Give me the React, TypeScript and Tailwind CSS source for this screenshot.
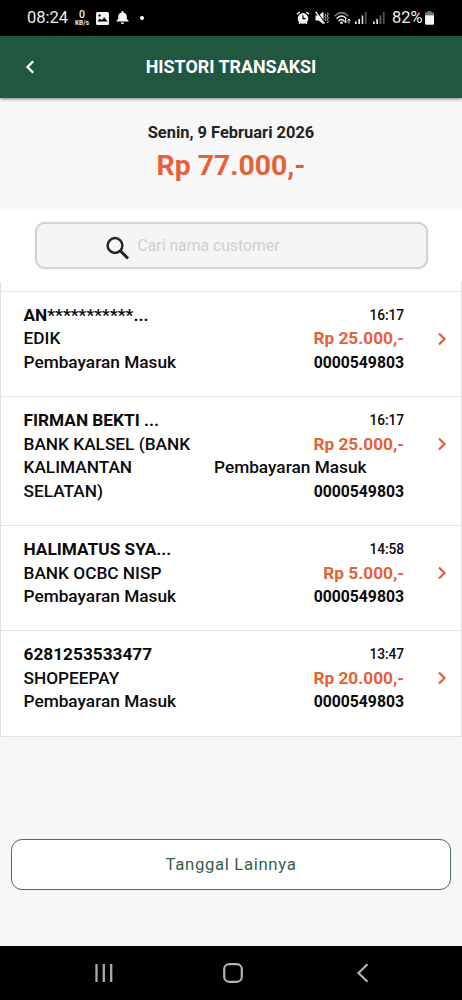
import React from "react";

type Transaction = {
  name: string;
  source: string[];
  time: string;
  amount: string;
  code: string;
};

const transactions: Transaction[] = [
  { name: "AN***********...", source: ["EDIK"], time: "16:17", amount: "Rp 25.000,-", code: "0000549803" },
  {
    name: "FIRMAN BEKTI ...",
    source: ["BANK KALSEL (BANK", "KALIMANTAN", "SELATAN)"],
    time: "16:17",
    amount: "Rp 25.000,-",
    code: "0000549803",
  },
  { name: "HALIMATUS SYA...", source: ["BANK OCBC NISP"], time: "14:58", amount: "Rp 5.000,-", code: "0000549803" },
  { name: "6281253533477", source: ["SHOPEEPAY"], time: "13:47", amount: "Rp 20.000,-", code: "0000549803" },
];

function Signal({ className, weak = false }: { className: string; weak?: boolean }) {
  return (
    <svg className={className} width="12" height="14" viewBox="0 0 12 14">
      <rect x="0" y="10.5" width="1.7" height="2.5" fill="#e8e8e8" />
      <rect x="3.3" y="8" width="1.7" height="5" fill="#e8e8e8" />
      <rect x="6.6" y="4.5" width="1.7" height="8.5" fill={weak ? "#666" : "#d0d0d0"} />
      <rect x="9.9" y="1" width="1.7" height="12" fill="#555" />
    </svg>
  );
}

function StatusBar() {
  return (
    <div className="flex h-9 shrink-0 items-center bg-black pl-[27px] pr-[27px] text-[#ececec]">
      <span className="w-[47px] text-[16.5px] leading-none">08:24</span>
      <span className="flex w-[16px] flex-col items-center text-[10.500px] font-medium leading-[11px]">
        <span>0</span>
        <span className="text-[6.500px] font-bold leading-[7px]">KB/s</span>
      </span>
      <svg className="ml-[6px]" width="13" height="13" viewBox="0 0 13 13">
        <path
          fillRule="evenodd"
          fill="#f2f2f2"
          d="M1.5 0h10A1.5 1.5 0 0 1 13 1.5v10a1.5 1.5 0 0 1-1.500 1.500h-10A1.500 1.500 0 0 1 0 11.500v-10A1.500 1.500 0 0 1 1.500 0zM1.500 9.500h10L8.300 5.300 5.700 8.300 3.900 6.500zM3.600 2.300a1.200 1.200 0 1 0 .01 0z"
        />
      </svg>
      <svg className="ml-[7px]" width="13" height="14" viewBox="0 0 13 14">
        <path fill="#f2f2f2" d="M6.500 0a1 1 0 0 1 1 1v.4c2 .4 3.300 2 3.300 4V8l1.700 1.500v.9H.5v-.9L2.200 8V5.400c0-2 1.300-3.600 3.300-4V1a1 1 0 0 1 1-1zM4.900 11.600h3.200a1.600 1.600 0 0 1-3.200 0z" />
      </svg>
      <span className="ml-[11px] size-1 rounded-full bg-white" />
      <span className="grow" />
      <svg width="14" height="14" viewBox="0 0 14 14">
        <path d="M1 3.300 3.700 1M13 3.300 10.300 1M3 12.800l1.500-1.500M11 12.800l-1.500-1.500" stroke="#f2f2f2" strokeWidth="1.500" />
        <circle cx="7" cy="7.400" r="5.300" fill="#f2f2f2" />
        <path d="M7 4.200v3.400h2.600" stroke="#000" strokeWidth="1.200" fill="none" />
      </svg>
      <svg className="ml-[5px]" width="14" height="14" viewBox="0 0 14 14">
        <path d="M0.500 4.500h3L8.500.8v12.400L3.500 9.500h-3z" fill="#f2f2f2" />
        <path d="M1 0 10.500 12" stroke="#000" strokeWidth="1.200" />
        <path d="M.6.800 9.400 12.700" stroke="#f2f2f2" strokeWidth="1.300" />
        <path d="M10 2.500l1 1.500-1 1.500 1 1.500-1 1.500 1 1.500M12.300 1.500l1 1.800-1 1.700 1 1.800-1 1.700 1 1.800-1 1.700" stroke="#d8d8d8" strokeWidth=".9" fill="none" />
      </svg>
      <svg className="ml-[5px]" width="18" height="14" viewBox="0 0 18 14">
        <g fill="none" strokeLinecap="round">
          <path d="M1 4.700Q7.500-1.500 14 4.700" stroke="#777" strokeWidth="1.500" />
          <path d="M3 7.200Q7.500 2.800 12 7.200M5 9.700Q7.500 7.200 10 9.700" stroke="#e8e8e8" strokeWidth="1.500" />
        </g>
        <circle cx="7.500" cy="11.800" r="1.300" fill="#e8e8e8" />
        <path d="M11.500 7.500v4M9.900 10.200l1.600 1.800 1.600-1.800M15 12.500v-4M13.400 9.800 15 8l1.600 1.800" stroke="#e8e8e8" strokeWidth="1" fill="none" />
      </svg>
      <Signal className="ml-[3px]" />
      <Signal className="ml-[6px]" weak />
      <span className="ml-[7px] w-[32px] whitespace-nowrap text-[16.500px] leading-none">82%</span>
      <svg className="ml-[1px] mr-px" width="9" height="14" viewBox="0 0 10 14" preserveAspectRatio="none">
        <path d="M3 0h4v1.300h1.500A1.500 1.500 0 0 1 10 2.800V4.500H0V2.800a1.500 1.500 0 0 1 1.500-1.500H3z" fill="#777" />
        <path d="M0 4.200h10v8A1.500 1.500 0 0 1 8.500 13.700h-7A1.500 1.500 0 0 1 0 12.200z" fill="#f5f5f5" />
      </svg>
    </div>
  );
}

function Row({ tx }: { tx: Transaction }) {
  const stacked = tx.source.length > 1;
  return (
    <div className="flex border-b border-[#e4e4e4] pb-[21.700px] pl-[22.500px] pt-[11.800px] text-[17.250px] font-medium leading-[23.600px] text-[#0b0b0b]">
      <div className="w-[190.500px] whitespace-nowrap">
        <div className="font-bold">{tx.name}</div>
        {tx.source.map((line) => (
          <div key={line}>{line}</div>
        ))}
        {!stacked && <div>Pembayaran Masuk</div>}
      </div>
      <div className="w-[190px] whitespace-nowrap text-right">
        <div className="text-[13.750px]/[23.600px] tracking-[-0.100px]">{tx.time}</div>
        <div className="font-bold text-[#e66038]">{tx.amount}</div>
        {stacked && <div className="text-left">Pembayaran Masuk</div>}
        <div className="text-[15.750px]/[23.600px] font-bold">{tx.code}</div>
      </div>
      <svg className="ml-[33px] mt-[28.300px]" width="10" height="14" viewBox="0 0 10 14">
        <path d="M2 1.500 7.500 7 2 12.500" fill="none" stroke="#e35f3a" strokeWidth="2.200" />
      </svg>
    </div>
  );
}

export default function App() {
  return (
    <div className="flex h-[1000px] w-[462px] flex-col overflow-hidden bg-[#f7f7f7] font-['Roboto',sans-serif]">
      <StatusBar />
      <header className="z-10 flex h-[62px] shrink-0 items-center bg-[#21573f] shadow-[0_1px_3px_rgba(0,0,0,0.5)]">
        <svg className="ml-[25px]" width="10" height="14" viewBox="0 0 10 14">
          <path d="M8.200 1.300 2.500 7l5.700 5.700" fill="none" stroke="#fff" strokeWidth="2.300" />
        </svg>
        <h1 className="grow pr-[35px] text-center text-[17.900px] font-bold text-white">HISTORI TRANSAKSI</h1>
      </header>
      <section className="flex h-[112px] shrink-0 flex-col items-center pt-[24px]">
        <p className="text-[16.450px] font-bold leading-[22px] text-[#222]">Senin, 9 Februari 2026</p>
        <p className="text-[28.400px] font-bold leading-[44px] text-[#e66038]">Rp 77.000,-</p>
      </section>
      <section className="flex h-[72px] shrink-0 justify-center bg-white pt-[12px]">
        <div className="flex h-[47px] w-[393px] items-center rounded-[10px] border-2 border-[#d3d3d3] bg-[#f5f5f5] shadow-[0_0_1px_#ccc]">
          <svg className="ml-[68.500px] mt-[5px]" width="25" height="25" viewBox="0 0 25 25">
            <circle cx="10" cy="9.500" r="7.400" fill="none" stroke="#242424" strokeWidth="2.500" />
            <path d="M15.500 15 23 22.500" stroke="#242424" strokeWidth="3" />
          </svg>
          <span className="ml-[7.500px] mt-px text-[15.750px] text-[#cfcfcf]">Cari nama customer</span>
        </div>
      </section>
      <main className="shrink-0 border-x border-[#e0e0e0] bg-white">
        <div className="h-[10px] border-b border-[#e8e8e8]" />
        {transactions.map((tx, i) => (
          <Row key={i} tx={tx} />
        ))}
      </main>
      <div className="grow" />
      <button className="mx-[11px] mb-[56px] h-[51px] shrink-0 rounded-[11px] border border-[#456f5c] bg-white pt-px text-[16.750px] tracking-[0.650px] text-[#345f4d]">
        Tanggal Lainnya
      </button>
      <nav className="flex h-[54px] shrink-0 items-center bg-black">
        <svg className="ml-[94px]" width="20" height="20" viewBox="0 0 20 20">
          <path d="M2.500 1v18M9.800 1v18M17.200 1v18" stroke="#aaa" strokeWidth="2.300" />
        </svg>
        <svg className="ml-[108px]" width="22" height="22" viewBox="0 0 22 22">
          <rect x="2.200" y="2.200" width="17.600" height="17.600" rx="5" fill="none" stroke="#b4b4b4" strokeWidth="2.200" />
        </svg>
        <svg className="ml-[112px]" width="14" height="20" viewBox="0 0 14 20">
          <path d="M11.500 1.300 2.500 10l9 8.700" fill="none" stroke="#b4b4b4" strokeWidth="2.200" />
        </svg>
      </nav>
    </div>
  );
}
